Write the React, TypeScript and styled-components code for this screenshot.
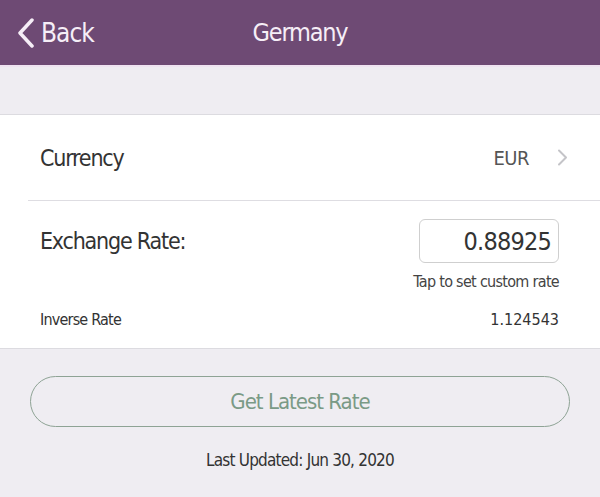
import React from "react";
import styled, { createGlobalStyle } from "styled-components";

const GlobalStyle = createGlobalStyle`
  html, body {
    margin: 0;
    padding: 0;
    background: #efedf2;
  }
  body {
    font-family: "DejaVu Sans Condensed", "Liberation Sans", sans-serif;
    color: #333333;
  }
  * { box-sizing: border-box; }
`;

const Page = styled.div`
  width: 600px;
  min-height: 497px;
  display: flex;
  flex-direction: column;
  background: #efedf2;
`;

const NavBar = styled.header`
  height: 67px;
  background: #6e4a74;
  border-bottom: 2px solid #efe3f1;
  display: grid;
  grid-template-columns: 1fr auto 1fr;
  align-items: center;
  color: #f6eef7;
`;

const BackButton = styled.button`
  justify-self: start;
  display: flex;
  align-items: center;
  gap: 6px;
  background: none;
  border: none;
  padding: 0 0 0 17px;
  color: inherit;
  font: inherit;
  font-size: 26px;
  letter-spacing: -1px;
  cursor: pointer;
`;

const Title = styled.h1`
  margin: 0;
  font-size: 25px;
  letter-spacing: -1.2px;
  font-weight: normal;
`;

const Band = styled.div`
  height: 48px;
  border-bottom: 1px solid #dcdbe0;
`;

const Section = styled.section`
  background: #ffffff;
  border-bottom: 1px solid #dcdbe0;
`;

const CurrencyRow = styled.div`
  height: 86px;
  display: flex;
  align-items: center;
  margin-left: 28px;
  padding: 0 32px 0 12px;
  border-bottom: 1px solid #dedde2;
`;

const Label = styled.span`
  flex: 1;
  font-size: 23px;
  letter-spacing: -1.2px;
  color: #333333;
`;

const Value = styled.span`
  font-size: 20px;
  letter-spacing: -0.5px;
  color: #555555;
  margin-right: 28px;
`;

const RateBlock = styled.div`
  padding: 18px 41px 0 40px;
  display: flex;
  flex-direction: column;
`;

const RateRow = styled.div`
  display: flex;
  align-items: center;
  justify-content: space-between;
`;

const RateInput = styled.div`
  width: 140px;
  height: 44px;
  border: 1px solid #cfcfcf;
  border-radius: 6px;
  display: flex;
  align-items: center;
  justify-content: flex-end;
  padding-right: 7px;
  font-size: 25px;
  letter-spacing: -0.8px;
  color: #333333;
`;

const Hint = styled.div`
  align-self: flex-end;
  font-size: 16px;
  letter-spacing: -0.7px;
  color: #444444;
  margin-top: 9px;
`;

const InverseRow = styled.div`
  display: flex;
  justify-content: space-between;
  align-items: center;
  height: 57px;
  padding-bottom: 1px;
`;

const Small = styled.span<{ $tight?: boolean }>`
  font-size: 16px;
  letter-spacing: ${(p) => (p.$tight ? "-0.8px" : "0")};
  color: #333333;
`;

const Actions = styled.div`
  padding: 27px 30px 0;
  display: flex;
  flex-direction: column;
  align-items: center;
`;

const LatestButton = styled.button`
  width: 100%;
  height: 51px;
  border: 1.5px solid #8ea395;
  border-radius: 26px;
  background: transparent;
  color: #7a9a86;
  font: inherit;
  font-size: 22px;
  letter-spacing: -1px;
  cursor: pointer;
`;

const Updated = styled.p`
  margin: 23px 0 0;
  font-size: 17px;
  letter-spacing: -0.8px;
  color: #333333;
`;

const BackChevron = () => (
  <svg width="18" height="30" viewBox="0 0 18 30" fill="none">
    <path d="M15 2 L3 15 L15 28" stroke="#f6eef7" strokeWidth="3.5" strokeLinecap="round" strokeLinejoin="round" />
  </svg>
);

const Disclosure = () => (
  <svg width="11" height="17" viewBox="0 0 11 17" fill="none">
    <path d="M2 1.5 L9 8.5 L2 15.5" stroke="#c4c4c8" strokeWidth="2" strokeLinecap="round" strokeLinejoin="round" />
  </svg>
);

export default function App() {
  return (
    <>
      <GlobalStyle />
      <Page>
        <NavBar>
          <BackButton>
            <BackChevron />
            Back
          </BackButton>
          <Title>Germany</Title>
          <span />
        </NavBar>
        <Band />
        <Section>
          <CurrencyRow>
            <Label>Currency</Label>
            <Value>EUR</Value>
            <Disclosure />
          </CurrencyRow>
          <RateBlock>
            <RateRow>
              <Label>Exchange Rate:</Label>
              <RateInput>0.88925</RateInput>
            </RateRow>
            <Hint>Tap to set custom rate</Hint>
            <InverseRow>
              <Small $tight>Inverse Rate</Small>
              <Small>1.124543</Small>
            </InverseRow>
          </RateBlock>
        </Section>
        <Actions>
          <LatestButton>Get Latest Rate</LatestButton>
          <Updated>Last Updated: Jun 30, 2020</Updated>
        </Actions>
      </Page>
    </>
  );
}
